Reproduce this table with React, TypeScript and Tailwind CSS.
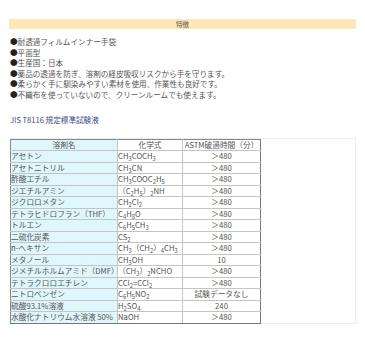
import React from "react";

/* 化学式: "_" の次の数字を下付きにする */
function Formula({ f }: { f: string }) {
  const parts = f.split(/(_\d+)/g);
  return (
    <>
      {parts.map((p, i) =>
        p.startsWith("_") ? (
          <span key={i} className="inline-block text-[5.8px] leading-none translate-y-[1.5px]">
            {p.slice(1)}
          </span>
        ) : (
          <span key={i}>{p}</span>
        )
      )}
    </>
  );
}

const FEATURES = [
  "耐透過フィルムインナー手袋",
  "平面型",
  "生産国：日本",
  "薬品の透過を防ぎ、溶剤の経皮吸収リスクから手を守ります。",
  "柔らかく手に馴染みやすい素材を使用、作業性も良好です。",
  "不織布を使っていないので、クリーンルームでも使えます。",
];

const ROWS: [string, string, string][] = [
  ["アセトン", "CH_3COCH_3", "＞480"],
  ["アセトニトリル", "CH_3CN", "＞480"],
  ["酢酸エチル", "CH_3COOC_2H_5", "＞480"],
  ["ジエチルアミン", "（C_2H_5）_2NH", "＞480"],
  ["ジクロロメタン", "CH_2Cl_2", "＞480"],
  ["テトラヒドロフラン（THF）", "C_4H_8O", "＞480"],
  ["トルエン", "C_6H_5CH_3", "＞480"],
  ["二硫化炭素", "CS_2", "＞480"],
  ["n-ヘキサン", "CH_3（CH_2）_4CH_3", "＞480"],
  ["メタノール", "CH_3OH", "10"],
  ["ジメチルホルムアミド（DMF）", "（CH_3）_2NCHO", "＞480"],
  ["テトラクロロエチレン", "CCl_2=CCl_2", "＞480"],
  ["ニトロベンゼン", "C_6H_5NO_2", "試験データなし"],
  ["硫酸93.1%溶液", "H_2SO_4", "240"],
  ["水酸化ナトリウム水溶液 50%", "NaOH", "＞480"],
];

export default function App() {
  return (
    <div
      className="w-[365px] h-[343px] bg-white text-[#444] overflow-hidden"
      style={{ fontFamily: '"Noto Sans CJK JP", "Noto Sans", sans-serif' }}
    >
      <div className="pt-[19px] pl-[9px] pr-[9px]">
        {/* 特徴 */}
        <div className="h-[10px] bg-[#fde6b8] flex items-center justify-center text-[6.5px] leading-none text-[#555]">
          特徴
        </div>

        <ul className="mt-[8px] pl-px text-[7.6px] leading-[10.6px] text-[#555]">
          {FEATURES.map((t) => (
            <li key={t} className="whitespace-nowrap">
              <span className="text-[#222]">●</span>
              {t}
            </li>
          ))}
        </ul>

        <p className="mt-[14px] pl-px text-[7.6px] leading-[10px] text-[#3a4a8c]">
          JIS T8116 規定標準試験液
        </p>

        {/* 試験液テーブル */}
        <div className="mt-[13px] ml-px border border-[#ececec] h-[186px]">
          <table className="table-fixed w-[250px] border-collapse border border-[#888] text-[7.7px] leading-none text-[#555] -ml-px">
            <colgroup>
              <col className="w-[107px]" />
              <col className="w-[65px]" />
              <col className="w-[78px]" />
            </colgroup>
            <thead>
              <tr className="h-[11.5px]">
                <th className="bg-[#def6fc] border border-[#c4c4c4] border-l-[#888] border-t-[#888] font-normal text-center p-0">
                  溶剤名
                </th>
                <th className="border border-[#c4c4c4] border-t-[#888] font-normal text-center p-0">
                  化学式
                </th>
                <th className="border border-[#c4c4c4] border-t-[#888] border-r-[#777] font-normal text-center p-0 whitespace-nowrap">
                  ASTM破過時間（分）
                </th>
              </tr>
            </thead>
            <tbody>
              {ROWS.map(([name, f, t], i) => {
                const last = i === ROWS.length - 1 ? "border-b-[#777]" : "";
                return (
                  <tr key={name} className="h-[11.5px]">
                    <td className={`bg-[#def6fc] border border-[#c4c4c4] border-l-[#888] p-0 whitespace-nowrap overflow-visible ${last}`}>
                      {name}
                    </td>
                    <td className={`border border-[#c4c4c4] p-0 whitespace-nowrap ${last}`}>
                      <Formula f={f} />
                    </td>
                    <td className={`border border-[#c4c4c4] border-r-[#777] p-0 text-center whitespace-nowrap ${last}`}>
                      {t}
                    </td>
                  </tr>
                );
              })}
            </tbody>
          </table>
        </div>
      </div>
    </div>
  );
}
